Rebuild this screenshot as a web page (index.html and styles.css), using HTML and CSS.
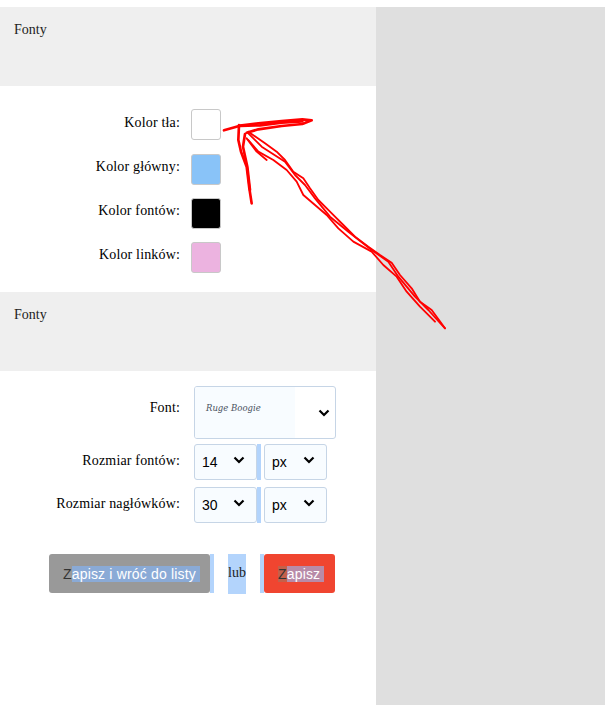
FILE: index.html
```html
<!DOCTYPE html>
<html lang="pl">
<head>
<meta charset="utf-8">
<title>Fonty</title>
<link rel="stylesheet" href="styles.css">
</head>
<body>
<div class="page">
  <main class="panel">
    <h2 class="head">Fonty</h2>
    <section class="colors">
      <div class="row"><label class="label">Kolor tła:</label><span class="swatch swatch-white"></span></div>
      <div class="row"><label class="label">Kolor główny:</label><span class="swatch swatch-blue"></span></div>
      <div class="row"><label class="label">Kolor fontów:</label><span class="swatch swatch-black"></span></div>
      <div class="row"><label class="label">Kolor linków:</label><span class="swatch swatch-pink"></span></div>
    </section>
    <h2 class="head">Fonty</h2>
    <section class="fonts">
      <div class="frow frow-font">
        <label class="label label-font">Font:</label>
        <div class="fontpick">
          <span class="fontpreview"><span class="fontname">Ruge Boogie</span></span>
          <span class="fontarrow"><svg class="chev" viewBox="0 0 12 8"><path d="M1.500 1.500 6 6l4.500-4.500"/></svg></span>
        </div>
      </div>
      <div class="frow">
        <label class="label label-size">Rozmiar fontów:</label>
        <div class="pick pick-num">14<svg class="chev" viewBox="0 0 12 8"><path d="M1.500 1.500 6 6l4.500-4.500"/></svg></div>
        <span class="sel-gap"></span>
        <div class="pick pick-unit">px<svg class="chev" viewBox="0 0 12 8"><path d="M1.500 1.500 6 6l4.500-4.500"/></svg></div>
      </div>
      <div class="frow">
        <label class="label label-size">Rozmiar nagłówków:</label>
        <div class="pick pick-num">30<svg class="chev" viewBox="0 0 12 8"><path d="M1.500 1.500 6 6l4.500-4.500"/></svg></div>
        <span class="sel-gap"></span>
        <div class="pick pick-unit">px<svg class="chev" viewBox="0 0 12 8"><path d="M1.500 1.500 6 6l4.500-4.500"/></svg></div>
      </div>
    </section>
    <div class="actions">
      <a class="btn btn-gray"><span class="z">Z</span><span class="hl hl-gray">apisz i wróć do listy</span></a>
      <span class="sliver"></span>
      <span class="lub">lub</span>
      <span class="sliver sliver-r"></span>
      <a class="btn btn-red"><span class="z z-red">Z</span><span class="hl hl-red">apisz</span></a>
    </div>
  </main>
  <aside class="side"></aside>
</div>
<svg class="scribble" viewBox="0 0 720 675" aria-hidden="true">
  <path class="thick" d="M27 61 75 47 130 40 200 33 262 28 290 31 262 42 200 48 130 58 95 68"/>
  <path class="thick" d="M75 48 135 46 200 38 262 34"/>
  <path class="thick" d="M72 45 70 90 78 125 95 170 103 235 110 280"/>
  <path class="thick" d="M90 72 84 110 97 170 105 240"/>
  <path d="M100 65 150 100 185 125 210 150 235 185 265 205 285 235 310 270 345 305 385 345 420 380 460 410 495 435 530 458 555 495 590 535 615 575 650 600 690 655"/>
  <path d="M100 90 130 125 175 150 215 180 245 215 265 255 300 285 335 315 370 355 415 395 470 425 505 465 545 500 575 545 615 590 660 635"/>
  <path d="M100 70 140 110 210 155 240 195 270 225 300 265 345 320 400 365 470 420 520 455 550 500 600 560 640 600 690 655"/>
  <path d="M95 85 125 125 155 150"/>
</svg>
</body>
</html>
```
FILE: styles.css
```css
* { box-sizing: border-box; }
html, body { margin: 0; padding: 0; background: #fff; }
body { width: 605px; height: 705px; overflow: hidden; position: relative; font-family: "Liberation Serif", "Times New Roman", serif; font-size: 14px; color: #000; }
.page { display: flex; height: 698px; margin-top: 7px; }
.panel { width: 376px; background: #fff; }
.side { flex: 1; background: #dfdfdf; }
.head { margin: 0; height: 79px; padding: 14px 14px 0; background: #efefef; font-weight: 400; font-size: 14px; line-height: 17px; color: #222; }
.colors { display: flex; flex-direction: column; gap: 13px; padding: 23px 0 19px; }
.row { display: flex; align-items: center; height: 31px; }
.row:first-child { margin-bottom: 1px; }
.label { width: 180px; text-align: right; line-height: 17px; letter-spacing: 0.16px; }
.row .label { margin-top: -5px; }
.row + .row .label { margin-top: -7px; }
.swatch { width: 30px; height: 31px; margin-left: 11px; border: 1px solid #c8c8c8; border-radius: 3px; }
.swatch-white { background: #fff; }
.swatch-blue { background: #89c3f8; }
.swatch-black { background: #000; }
.swatch-pink { background: #ecb3e0; }
.fonts { display: flex; flex-direction: column; gap: 7px; padding-top: 15px; }
.frow { display: flex; align-items: flex-start; }
.frow-font { margin-bottom: -2px; }
.label-font { margin-top: 13px; margin-right: 14px; }
.label-size { margin-top: 8px; margin-right: 14px; }
.fontpick { display: flex; width: 142px; height: 53px; border: 1px solid #c6d5e6; border-radius: 3px; background: #fff; overflow: hidden; }
.fontpreview { width: 100px; background: #f8fcff; padding: 12px 0 0 11px; }
.fontname { font-family: "DejaVu Serif", serif; font-style: italic; font-size: 8.500px; line-height: 14px; color: #4a5260; white-space: nowrap; }
.fontarrow { flex: 1; display: flex; align-items: center; justify-content: flex-end; }
.chev { width: 12px; height: 8px; fill: none; stroke: #000; stroke-width: 2.200; }
.fontarrow .chev { margin: 0 5px 0 0; }
.pick { display: flex; align-items: center; justify-content: space-between; width: 63px; height: 36px; padding: 0 11px 0 7px; border: 1px solid #c6d5e6; border-radius: 3px; background: #f8fcff; font-family: "Liberation Sans", Arial, sans-serif; font-size: 14px; }
.pick .chev { margin-top: -4px; }
.sel-gap { width: 4px; height: 36px; margin-right: 3px; background: #b3d4fc; }
.actions { display: flex; align-items: flex-start; height: 40px; margin-top: 31px; padding-left: 49px; }
.btn { display: flex; align-items: center; height: 39px; border-radius: 3px; font-family: "Liberation Sans", Arial, sans-serif; font-size: 14px; line-height: 16px; letter-spacing: 0.17px; color: #fff; }
.btn-gray { width: 161px; padding-left: 14px; background: #999; }
.btn-red { width: 71px; padding-left: 14px; background: #f04530; }
.z { color: #333; }
.hl { padding-right: 4px; }
.hl-gray { background: #8aaad6; }
.z-red { background: #c4604a; }
.hl-red { background: #b88ba8; }
.sliver { width: 4px; height: 39px; background: #b3d4fc; }
.sliver-r { margin-left: 14px; }
.lub { width: 18px; height: 40px; margin-left: 14px; background: #b3d4fc; line-height: 37px; text-align: center; color: #222; }
.scribble { position: absolute; left: 215px; top: 110px; width: 240px; height: 225px; }
.scribble path { fill: none; stroke: #f00; stroke-width: 5.500; stroke-linejoin: round; stroke-linecap: round; }
.scribble .thick { stroke-width: 8; }
```
